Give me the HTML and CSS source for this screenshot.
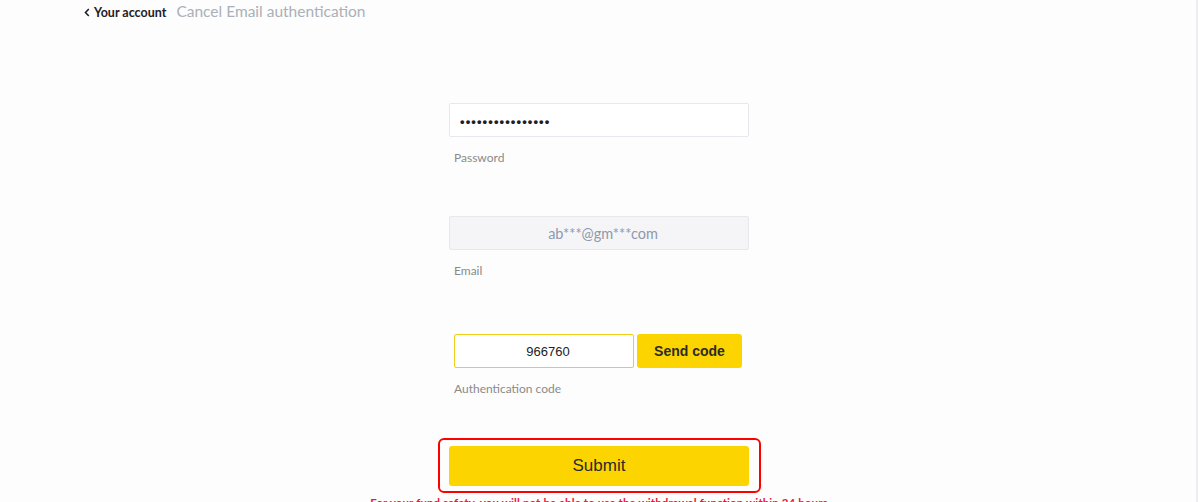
FILE: index.html
```html
<!DOCTYPE html>
<html lang="en">
<head>
  <meta charset="UTF-8" />
  <title>Cancel Email authentication</title>
  <link rel="stylesheet" href="styles.css">
</head>
<body>
  <div class="page">
    <div class="crumbs">
      <a class="back" href="#">
        <svg width="6" height="9" viewBox="0 0 6 9"><path d="M4.8 1 L1.5 4.5 L4.8 8" fill="none" stroke="#1e2026" stroke-width="1.6"/></svg>
        <span>Your account</span>
      </a>
      <span class="crumb-title">Cancel Email authentication</span>
    </div>

    <form class="form">
      <div class="field field-pass">
        <div class="input"><span class="dots">••••••••••••••••</span></div>
        <div class="label">Password</div>
      </div>

      <div class="field field-mail">
        <div class="input input-off">ab***@gm***com</div>
        <div class="label">Email</div>
      </div>

      <div class="field field-code">
        <div class="code-row">
          <div class="input input-code">966760</div>
          <button type="button" class="btn-send">Send code</button>
        </div>
        <div class="label">Authentication code</div>
      </div>

      <div class="mark">
        <button type="button" class="btn-submit">Submit</button>
      </div>
    </form>

    <p class="note">For your fund safety, you will not be able to use the withdrawal function within 24 hours</p>
  </div>
</body>
</html>
```

FILE: styles.css
```css
html, body {
  margin: 0;
  padding: 0;
  background: #fff;
  font-family: 'Lato', sans-serif;
}

.page {
  width: 1198px;
  height: 502px;
  box-sizing: border-box;
  padding-left: 2px;
  border-right: 2px solid #eceef5;
  background: #fdfdfd;
  overflow: hidden;
}

/* top breadcrumb */
.crumbs {
  display: flex;
  align-items: baseline;
  padding: 2px 0 0 82px;
  height: 22px;
}

.back {
  display: flex;
  align-items: center;
  gap: 4px;
  color: #1e2026;
  text-decoration: none;
  font-size: 12.5px;
  font-weight: 700;
}

.crumb-title {
  margin-left: 10px;
  font-size: 15.5px;
  color: #aab0b8;
}

.form {
  width: 300px;
  margin: 79px auto 0;
}

.input {
  height: 34px;
  box-sizing: border-box;
  border: 1px solid #e6e8ed;
  border-radius: 2px;
  background: #fff;
  display: flex;
  align-items: center;
}

.dots {
  font-family: 'Liberation Sans', sans-serif;
  font-size: 13px;
  font-weight: 700;
  letter-spacing: 1.1px;
  color: #1e2026;
  padding-left: 10px;
  padding-top: 2px;
}

.input-off {
  background: #f5f5f8;
  justify-content: center;
  color: #8f99ab;
  font-size: 14.5px;
  padding-left: 8px;
}

.label {
  margin: 13px 0 0 5px;
  font-size: 12px;
  line-height: 16px;
  color: #8a8a8a;
}

.field-pass { margin-bottom: 50px; }
.field-mail { margin-bottom: 55px; }
.field-mail .label { margin-top: 13px; }
.field-code { margin-bottom: 41px; }
.field-code .label { margin-top: 13px; }

.code-row {
  display: flex;
  gap: 3px;
  margin-left: 5px;
}

.input-code {
  width: 180px;
  border-color: #f0cf1a;
  justify-content: center;
  font-family: 'Liberation Sans', sans-serif;
  font-size: 13px;
  color: #222;
  padding-left: 8px;
}

button {
  font-family: 'Liberation Sans', sans-serif;
  border: none;
  background: #fcd500;
  color: #2b2b2b;
  cursor: pointer;
  border-radius: 3px;
}

.btn-send {
  width: 105px;
  height: 34px;
  font-size: 14px;
  font-weight: 700;
}

/* red highlight round the submit */
.mark {
  margin: 0 -12px 0 -11px;
  padding: 6px 10px 5px 9px;
  border: 2px solid #ff0000;
  border-radius: 6px;
}

.btn-submit {
  display: block;
  width: 100%;
  height: 40px;
  font-size: 17px;
}

.note {
  margin: 3px 0 0;
  text-align: center;
  font-size: 11.5px;
  font-weight: 700;
  letter-spacing: 0.1px;
  color: #e8173f;
  white-space: nowrap;
}
```
